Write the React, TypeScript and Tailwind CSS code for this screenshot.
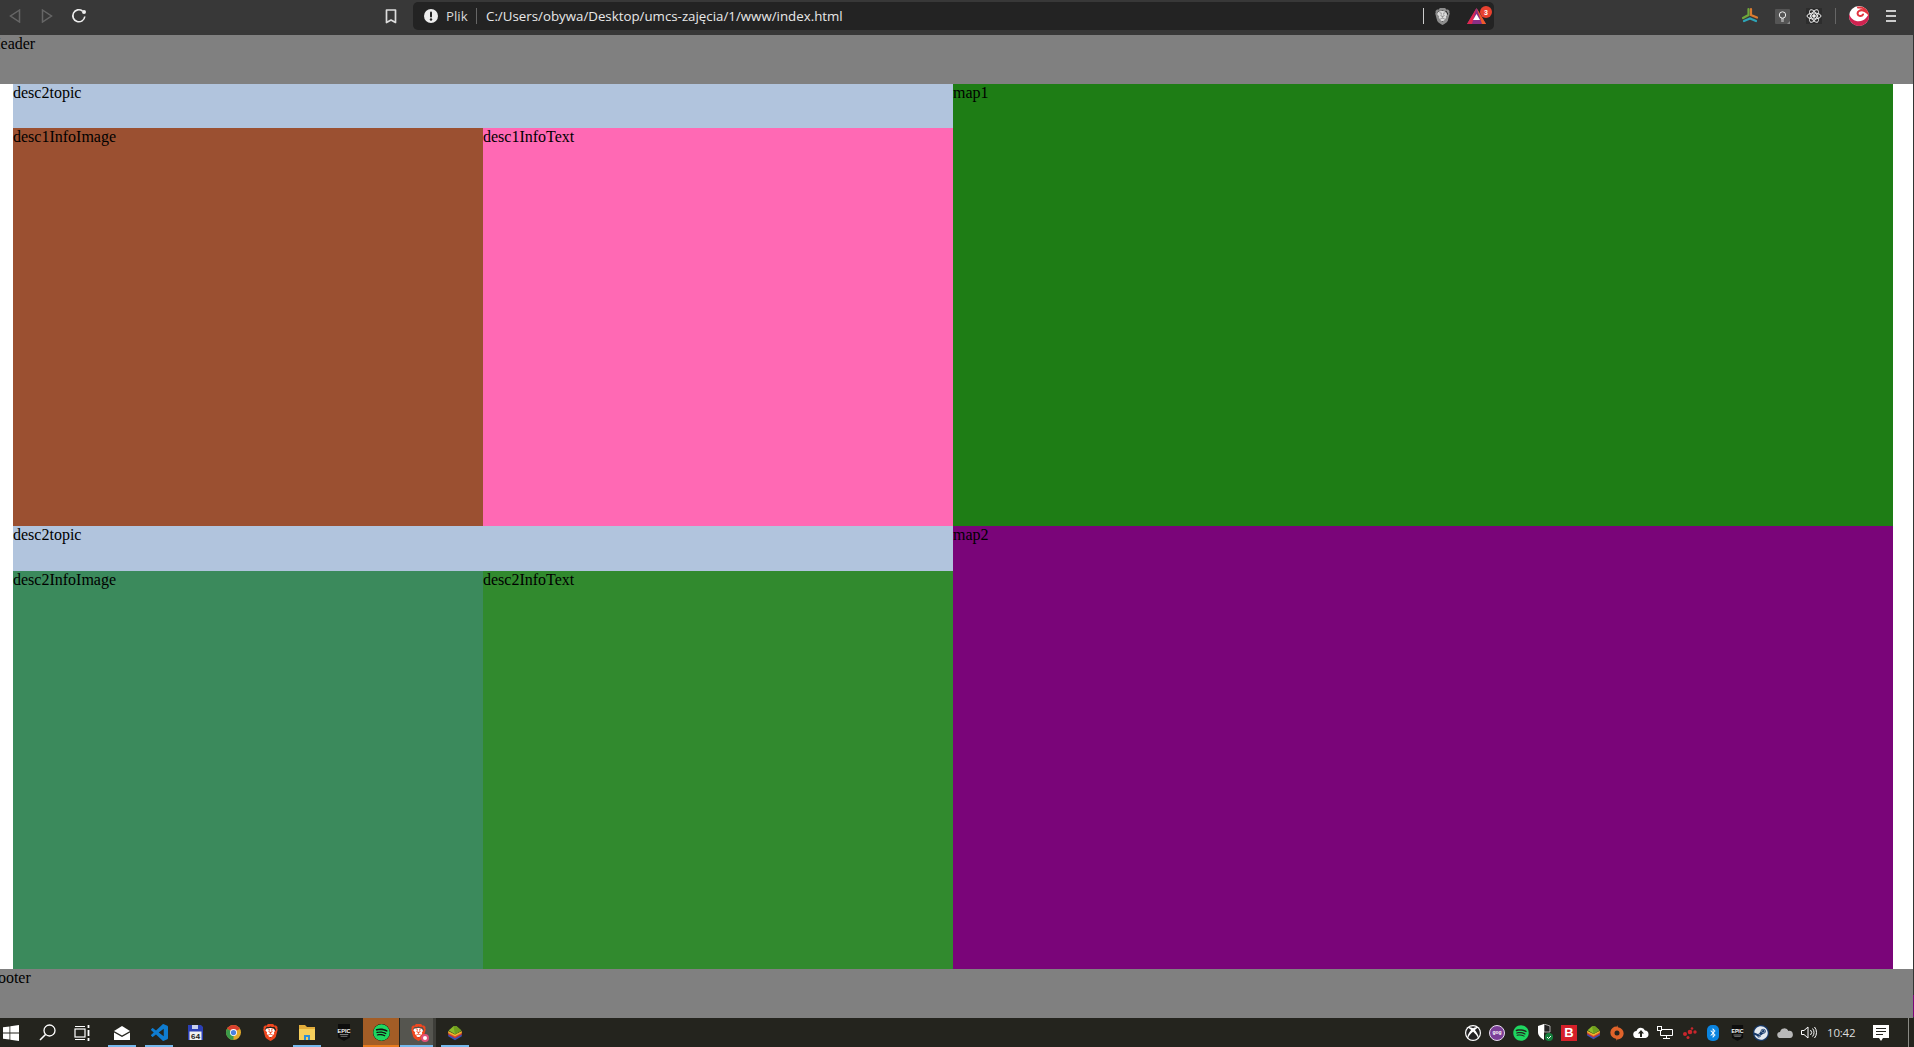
import React from "react";
import { FaXbox, FaSteam, FaSpotify, FaBluetoothB } from "react-icons/fa";
import { SiBrave } from "react-icons/si";

const Gap = ({ cls }: { cls: string }) => <div className={cls} />;

const Slot = ({ cls, children, bar }: { cls: string; children: React.ReactNode; bar?: string }) => (
  <div className={`relative flex h-full items-center justify-center ${cls}`}>
    {children}
    {bar ? <div className={`absolute bottom-0 h-[2px] ${bar}`} /> : null}
  </div>
);

const BraveColor = ({ size, tint, back }: { size: number; tint: string; back: string }) => (
  <span className="relative flex items-center justify-center" style={{ width: size, height: size }}>
    <span className={`absolute h-[58%] w-[62%] rounded-sm ${back}`} />
    <SiBrave className={`relative ${tint}`} size={size} />
  </span>
);

const Bluestacks = ({ size }: { size: number }) => (
  <svg width={size} height={size} viewBox="0 0 20 20">
    <path d="M1.500 11.500 10 16l8.500-4.500V14L10 19l-8.500-5z" fill="#3b4fb0" />
    <path d="M1.500 9.500 10 14l8.500-4.500V12L10 16.500 1.500 12z" fill="#d63c36" />
    <path d="M1.500 7.500 10 12l8.500-4.500V10L10 14.500 1.500 10z" fill="#f0b32a" />
    <path d="M2 7l6-5.500h4L18 7l-8 4.500z" fill="#8cbb2a" />
    <path d="M8 1.500h4L18 7l-8 4.500z" fill="#6f9f1e" />
  </svg>
);

const EpicBadge = ({ w, h }: { w: number; h: number }) => (
  <svg width={w} height={h} viewBox="0 0 16 20">
    <path d="M1 0h14v16l-7 4-7-4z" fill="#0d0d0d" />
    <text x="8" y="10" textAnchor="middle" fontSize="6.500" fontWeight="700" fill="#fff" fontFamily="'Liberation Sans',sans-serif">EPIC</text>
    <rect x="3" y="12" width="10" height="1" fill="#999" />
    <rect x="4" y="14" width="8" height="1" fill="#777" />
  </svg>
);

const Toolbar = () => (
  <div className="flex h-[35px] items-center bg-[#383838] pb-[3px]">
    <Slot cls="w-[30px]">
      <svg width="12" height="14" viewBox="0 0 12 14" fill="none" stroke="#666" strokeWidth="1.500"><path d="M10.500 1 1.500 7l9 6z" /></svg>
    </Slot>
    <Slot cls="ml-[1px] w-[32px]">
      <svg width="12" height="14" viewBox="0 0 12 14" fill="none" stroke="#666" strokeWidth="1.500"><path d="M1.500 1l9 6-9 6z" /></svg>
    </Slot>
    <Slot cls="w-[32px]">
      <svg width="16" height="16" viewBox="0 0 16 16" fill="none"><path d="M13.800 8.500A6 6 0 1 1 11.500 3" stroke="#eee" strokeWidth="1.600" /><circle cx="13" cy="4" r="2" fill="#eee" /></svg>
    </Slot>
    <Gap cls="w-[280px]" />
    <Slot cls="w-[32px]">
      <svg width="12" height="15" viewBox="0 0 12 15" fill="none" stroke="#ddd" strokeWidth="1.700"><path d="M1.500 1h9v12.500L6 11l-4.500 2.500z" strokeLinejoin="round" /></svg>
    </Slot>
    <Gap cls="w-[6px]" />
    <div className="flex h-[28px] w-[1081px] items-center rounded-[5px] bg-[#232323] pr-[3px] font-['Open_Sans',sans-serif] text-[13.300px] text-[#e8e8e8]">
      <svg className="ml-[11px]" width="14" height="14" viewBox="0 0 14 14"><circle cx="7" cy="7" r="7" fill="#eee" /><rect x="6" y="2.500" width="2" height="6" rx="1" fill="#232323" /><circle cx="7" cy="10.500" r="1.200" fill="#232323" /></svg>
      <span className="ml-[8px] w-[22px] text-[#d8d8d8]">Plik</span>
      <div className="ml-[8px] h-[16px] w-px bg-[#666]" />
      <span className="ml-[9px]">C:/Users/obywa/Desktop/umcs-zajęcia/1/www/index.html</span>
      <div className="flex-1" />
      <div className="h-[16px] w-px bg-[#ccc]" />
      <Slot cls="ml-[7px] w-[22px]">
        <BraveColor size={17} tint="text-[#8c8c8c]" back="bg-[#dddddd]" />
      </Slot>
      <div className="relative ml-[14px] flex h-[28px] w-[24px] items-center">
        <svg width="19" height="16" viewBox="0 0 19 16">
          <path d="M9.500 0 19 16H0z" fill="#8a2f85" />
          <path d="M9.500 0 0 16h5z" fill="#e0284e" />
          <path d="M9.500 0 19 16h-4z" fill="#f05a28" />
          <path d="M9.500 6 13 12H6z" fill="#fff" />
        </svg>
        <span className="absolute left-[13px] top-[4px] flex h-[12px] w-[12px] items-center justify-center rounded-full bg-[#e8412f] font-['Liberation_Sans',sans-serif] text-[7px] font-bold leading-none text-white">3</span>
      </div>
    </div>
    <Gap cls="w-[244px]" />
    <Slot cls="w-[24px]">
      <svg width="18" height="18" viewBox="0 0 18 18" fill="none" strokeWidth="2.200" strokeLinecap="round">
        <path d="M7.500 2v6L2 11" stroke="#6fa83a" />
        <path d="M10 2v6l6 2.500" stroke="#d97b30" />
        <path d="M3 14l6-2.500L15 14" stroke="#2ea5b8" />
      </svg>
    </Slot>
    <Gap cls="w-[8px]" />
    <Slot cls="w-[24px]">
      <svg width="15" height="15" viewBox="0 0 15 15" fill="none"><rect width="15" height="15" rx="1" fill="#555" /><circle cx="7.500" cy="6" r="3.200" stroke="#eee" /><path d="M6 10h3M6.200 12h2.600" stroke="#eee" /><path d="M12 15l3-3v3z" fill="#888" /></svg>
    </Slot>
    <Gap cls="w-[8px]" />
    <Slot cls="w-[24px]">
      <svg width="16" height="16" viewBox="0 0 16 16" fill="none" stroke="#eee" strokeWidth="1"><rect width="16" height="16" fill="#2d2d2d" stroke="none" /><ellipse cx="8" cy="8" rx="7" ry="3" /><ellipse cx="8" cy="8" rx="7" ry="3" transform="rotate(60 8 8)" /><ellipse cx="8" cy="8" rx="7" ry="3" transform="rotate(120 8 8)" /><circle cx="8" cy="8" r="1.300" fill="#eee" /></svg>
    </Slot>
    <Gap cls="w-[9px]" />
    <div className="h-[16px] w-px bg-[#666]" />
    <Gap cls="w-[11px]" />
    <Slot cls="w-[24px]">
      <svg width="20" height="20" viewBox="0 0 20 20" fill="none">
        <circle cx="10" cy="10" r="10" fill="#fff" />
        <path d="M10 20A10 10 0 0 1 .2 8c1.500 6 8.300 9 13.800 6.300 2.500-1.300 4-3.500 5.800-6.300A10 10 0 0 1 10 20z" fill="#cf2350" />
        <path d="M9 1.500c5-.5 8.500 2 9.500 5.500-2.500-2.500-6-3.500-8.500-2-2 1.200-2 4.500 1 5 1.500.2 2.500-.5 3-1.500" stroke="#e2343e" strokeWidth="2" strokeLinecap="round" />
      </svg>
    </Slot>
    <Gap cls="w-[8px]" />
    <Slot cls="w-[24px]">
      <svg width="10" height="12" viewBox="0 0 10 12" fill="#ccc"><rect width="10" height="2" /><rect y="5" width="10" height="2" /><rect y="10" width="10" height="2" /></svg>
    </Slot>
  </div>
);

const Taskbar = () => (
  <div className="flex h-[29px] items-center bg-[#24241e]">
    <Slot cls="w-[22px]">
      <svg width="16" height="16" viewBox="0 0 16 16" fill="#fff"><path d="M0 2.300 6.500 1.400v6.200H0zM7.300 1.300 16 0v7.600H7.300zM0 8.400h6.500v6.200L0 13.700zM7.300 8.400H16V16l-8.700-1.300z" /></svg>
    </Slot>
    <Slot cls="ml-[7px] w-[36px]">
      <svg width="17" height="17" viewBox="0 0 17 17" fill="none" stroke="#fff" strokeWidth="1.300"><circle cx="10.500" cy="6.500" r="5.500" /><path d="M6.500 10.500 1 16" strokeWidth="1.600" /></svg>
    </Slot>
    <Slot cls="ml-[-1px] w-[36px]">
      <svg width="17" height="16" viewBox="0 0 17 16" fill="none" stroke="#fff" strokeWidth="1.200"><rect x="1" y="4" width="10" height="8" /><path d="M1 1.500h10M1 14.500h10" /><path d="M14.500 0v3M14.500 5v6M14.500 13v3" strokeWidth="1.800" /></svg>
    </Slot>
    <Slot cls="ml-[4px] w-[36px]" bar="w-[28px] bg-[#76b9ed]">
      <svg width="16" height="14" viewBox="0 0 16 14" fill="#fff"><path d="M0 5 8 0l8 5-8 4.500z" /><path d="M0 6.500 8 11l8-4.500V14H0z" /></svg>
    </Slot>
    <Slot cls="ml-[1px] w-[36px]" bar="w-[28px] bg-[#76b9ed]">
      <svg width="17" height="17" viewBox="0 0 24 24" fill="#0f7cd0"><path d="M23.150 2.587L18.210.21a1.494 1.494 0 0 0-1.705.29l-9.460 8.630-4.120-3.128a.999.999 0 0 0-1.276.057L.327 7.261A1 1 0 0 0 .326 8.740L3.899 12 .326 15.260a1 1 0 0 0 .001 1.479L1.650 17.940a.999.999 0 0 0 1.276.057l4.120-3.128 9.460 8.630a1.492 1.492 0 0 0 1.704.29l4.942-2.377A1.500 1.500 0 0 0 24 20.060V3.939a1.500 1.500 0 0 0-.850-1.352zm-5.146 14.861L10.826 12l7.178-5.448v10.896z" /></svg>
    </Slot>
    <Slot cls="w-[36px]">
      <svg width="15" height="15" viewBox="0 0 15 15"><path d="M0 0h13l2 2v13H0z" fill="#2b3fb5" /><rect x="4" y="0" width="6" height="4" fill="#c8d0ee" /><rect x="1.500" y="6.500" width="12" height="8.500" fill="#f0f0f0" /><text x="7.500" y="14" textAnchor="middle" fontSize="8" fontWeight="700" fill="#222" fontFamily="'Liberation Mono',monospace">64</text></svg>
    </Slot>
    <Slot cls="ml-[2px] w-[36px]">
      <svg width="15" height="15" viewBox="0 0 16 16"><circle cx="8" cy="8" r="8" fill="#e0a82a" /><path d="M8 8 1.100 4A8 8 0 0 1 14.900 4z" fill="#d8402f" /><path d="M8 8 1.100 4A8 8 0 0 0 8 16z" fill="#3a9a4a" /><circle cx="8" cy="8" r="3.700" fill="#fff" /><circle cx="8" cy="8" r="2.800" fill="#4a80e0" /></svg>
    </Slot>
    <Slot cls="ml-[1px] w-[36px]"><BraveColor size={17} tint="text-[#f0471f]" back="bg-white" /></Slot>
    <Slot cls="ml-[1px] w-[36px]" bar="w-[28px] bg-[#76b9ed]">
      <svg width="16" height="15" viewBox="0 0 16 15"><path d="M0 0h6l2 2h8v13H0z" fill="#e3ad3b" /><rect x="0" y="4" width="16" height="11" fill="#f6cf5c" /><path d="M5 15v-5h6v5H9v-3H7v3z" fill="#2f8fd8" /></svg>
    </Slot>
    <Slot cls="ml-[1px] w-[36px]"><EpicBadge w={14} h={17} /></Slot>
    <Slot cls="ml-[1px] w-[36px] bg-[#a35d26]" bar="left-0 w-[36px] bg-[#e87b1e]">
      <FaSpotify size={17} className="rounded-full bg-[#101010] text-[#1ed760]" />
    </Slot>
    <Slot cls="ml-[1px] w-[33px] bg-[#55554f] pl-[3px]" bar="left-0 w-[33px] bg-[#76b9ed]">
      <span className="relative flex">
        <BraveColor size={17} tint="text-[#f0471f]" back="bg-white" />
        <span className="absolute bottom-[-1px] right-[-2px] h-[8px] w-[8px] rounded-full border-2 border-[#e0507a] bg-white" />
      </span>
    </Slot>
    <div className="h-full w-[3px] bg-[#3e3e39]" />
    <Slot cls="ml-[1px] w-[36px]" bar="w-[28px] bg-[#76b9ed]"><Bluestacks size={16} /></Slot>
    <div className="flex-1" />
    <div className="flex h-full items-center">
      <Slot cls="w-[24px]"><span className="flex h-[16px] w-[16px] items-center justify-center rounded-full bg-white"><FaXbox size={14} className="text-[#222]" /></span></Slot>
      <Slot cls="w-[24px]">
        <span className="flex h-[16px] w-[16px] items-center justify-center rounded-full border-[1.500px] border-[#e9ddf0] bg-[#7b3f98] font-['Liberation_Sans',sans-serif] text-[5px] font-bold leading-[5px] text-white">gog</span>
      </Slot>
      <Slot cls="w-[24px]"><FaSpotify size={16} className="text-[#1ed760]" /></Slot>
      <Slot cls="w-[24px]">
        <svg width="16" height="17" viewBox="0 0 16 17"><path d="M7 0 1 2v6c0 4 3 6 6 8z" fill="#fff" /><path d="M7 0l6 2v6H7z" fill="#222" stroke="#fff" strokeWidth=".6" /><circle cx="12" cy="13" r="4" fill="#15803d" /><path d="M10 13l1.500 1.500L14 12" stroke="#fff" fill="none" /></svg>
      </Slot>
      <Slot cls="w-[24px]">
        <span className="flex h-[16px] w-[16px] items-center justify-center bg-[#d6202a] font-['Liberation_Sans',sans-serif] text-[13px] font-bold leading-none text-white">B</span>
      </Slot>
      <Slot cls="w-[24px]"><Bluestacks size={15} /></Slot>
      <Slot cls="w-[24px]">
        <svg width="14" height="16" viewBox="0 0 14 16" fill="none"><path d="M7 0 8 2.300A6 6 0 0 1 7 14.500V16L6 13.700A6 6 0 0 1 7 1.500z" fill="#e0632a" /><circle cx="7" cy="8" r="2.500" fill="#24241e" /></svg>
      </Slot>
      <Slot cls="w-[24px]">
        <svg width="16" height="11" viewBox="0 0 16 11"><path d="M4 11a3.500 3.500 0 0 1-.500-7A4.500 4.500 0 0 1 12 3.500 3.800 3.800 0 0 1 12.500 11z" fill="#fff" /><path d="M8 3 5 6.500h2V10h2V6.500h2z" fill="#24241e" /></svg>
      </Slot>
      <Slot cls="w-[24px]">
        <svg width="16" height="13" viewBox="0 0 16 13" fill="none" stroke="#fff"><path d="M3.500 3.500h12v6h-12z" /><path d="M6 12.500h7M9.500 9.500v3" /><rect x=".5" y=".5" width="4" height="4" fill="#24241e" /></svg>
      </Slot>
      <Slot cls="w-[24px]">
        <svg width="15" height="12" viewBox="0 0 15 12" fill="#c9262c"><circle cx="3" cy="7" r="2" /><circle cx="8" cy="5" r="2.300" /><circle cx="13" cy="5" r="1.700" /><circle cx="6" cy="10.500" r="1.500" /><circle cx="10" cy="1.500" r="1.300" /></svg>
      </Slot>
      <Slot cls="w-[24px]">
        <span className="flex h-[16px] w-[12px] items-center justify-center rounded-[5px] bg-[#0a84e0]"><FaBluetoothB size={10} className="text-white" /></span>
      </Slot>
      <Slot cls="w-[24px]"><EpicBadge w={13} h={16} /></Slot>
      <Slot cls="w-[24px]">
        <span className="flex h-[16px] w-[16px] items-center justify-center rounded-full bg-[#173a6b]"><FaSteam size={14} className="text-[#e4e9f0]" /></span>
      </Slot>
      <Slot cls="w-[24px]">
        <svg width="16" height="10" viewBox="0 0 16 10"><path d="M3.500 10a3 3 0 0 1-.500-6A4.500 4.500 0 0 1 11.500 3 3.500 3.500 0 0 1 13 10z" fill="#b8b8b8" /></svg>
      </Slot>
      <Slot cls="w-[23px]">
        <svg width="16" height="13" viewBox="0 0 16 13" fill="none" stroke="#fff"><path d="M.5 4.500h2.500L7 1v11L3 8.500H.5z" /><path d="M9.500 4a3.500 3.500 0 0 1 0 5M11.500 2.500a6 6 0 0 1 0 8M13.500 1a8.500 8.500 0 0 1 0 11" /></svg>
      </Slot>
      <span className="ml-[7px] w-[27px] whitespace-nowrap font-['Open_Sans',sans-serif] text-[11.500px] tracking-[-0.2px] text-[#dddddd]">10:42</span>
      <Gap cls="w-[19px]" />
      <Slot cls="w-[16px]">
        <svg width="16" height="16" viewBox="0 0 16 16"><path d="M0 0h16v13h-6l-2 3-2-3H0z" fill="#fff" /><path d="M3 3.500h10M3 6.500h10M3 9.500h7" stroke="#24241e" /></svg>
      </Slot>
      <Gap cls="w-[19px]" />
      <div className="h-full w-px bg-[#8a8a84]" />
      <Gap cls="w-[5px]" />
    </div>
  </div>
);

export default function App() {
  return (
    <div className="flex h-[1047px] w-[1914px] flex-col overflow-hidden bg-[#333333] font-['Liberation_Serif',serif] text-[16px] leading-[18px] text-black">
      <Toolbar />
      <div className="flex h-[983px]">
        <div className="flex w-[1913px] flex-col overflow-hidden bg-white">
          <div className="h-[49px] bg-[#808080]"><div className="ml-[-11px]">Header</div></div>
          <div className="grid h-[885px] grid-cols-[470px_470px_940px] grid-rows-[44px_398px_45px_398px] pl-[13px]">
            <div className="col-span-2 bg-[#b1c4dd]">desc2topic</div>
            <div className="row-span-2 bg-[#1e7d15]">map1</div>
            <div className="bg-[#9b5031]">desc1InfoImage</div>
            <div className="bg-[#ff69b4]">desc1InfoText</div>
            <div className="col-span-2 bg-[#b1c4dd]">desc2topic</div>
            <div className="row-span-2 bg-[#7a0579]">map2</div>
            <div className="bg-[#3b8a5c]">desc2InfoImage</div>
            <div className="bg-[#318a2e]">desc2InfoText</div>
          </div>
          <div className="h-[49px] bg-[#808080]"><div className="ml-[-11px]">Footer</div></div>
        </div>
        <div className="flex w-px flex-col">
          <div className="h-[960px]" />
          <div className="h-[22px] bg-[#7a0579]" />
        </div>
      </div>
      <Taskbar />
    </div>
  );
}
